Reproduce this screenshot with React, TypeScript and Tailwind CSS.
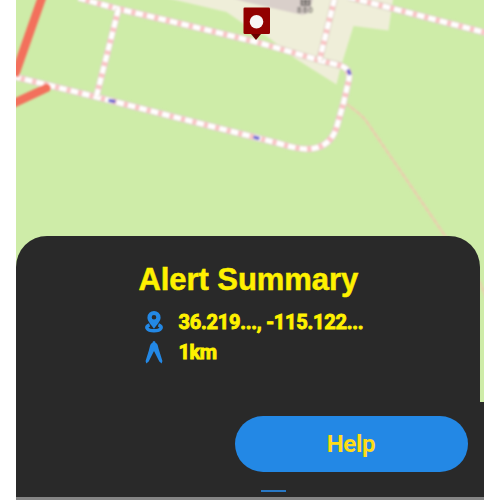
import React from "react";

const paths = [
  "M78 -2 L118 9 L165 20 L256 42 L318 60 L340 65.5 Q350 69 348.5 79 L343 103 L337 124 Q331 149 306 149 Q297 149 277 143 L170 116 L96 97 L13 76.5",
  "M118 9 L96 96",
  "M334 -1 L319 60",
  "M348 -3 L390 8 L486 33",
];

function MapView() {
  return (
    <svg className="col-start-1 row-start-1 block" width="468" height="410" viewBox="15.5 0 468 410">
      <defs>
        <filter id="soft" x="-5%" y="-5%" width="110%" height="110%">
          <feGaussianBlur stdDeviation="0.9" />
        </filter>
      </defs>
      <rect x="15" width="470" height="410" fill="#ceeca8" />
      <g filter="url(#soft)">
        <path d="M158 -4 L226 12 L245 25 L266 36 L294 58 L336 84.5 L340 68 L353 26 L388 30.5 L393 -4 Z" fill="#efeed9" />
        <path d="M229 -3 L245 2 L302 15 L309 13 L313 -3 Z" fill="#d9cfca" />
        <path d="M345 103 C351 108 359 113 365 120 L446 238 Q472 262 486 298" fill="none" stroke="#e6d6b0" strokeWidth="2.6" />
        <path d="M345 103 C351 108 359 113 365 120 L446 238 Q472 262 486 298" fill="none" stroke="#ecc7ab" strokeWidth="1.4" strokeDasharray="4 3" />
        {paths.map((d) => (
          <g key={d} fill="none" strokeLinejoin="round">
            <path d={d} stroke="#d8d8c8" strokeWidth="7" />
            <path d={d} stroke="#f9c6c6" strokeWidth="5.4" />
            <path d={d} stroke="#fff" strokeWidth="5" strokeDasharray="7.4 4.4" />
          </g>
        ))}
        <path d="M42 -4 L14 76" stroke="#f3705b" strokeWidth="8.5" />
        <path d="M12 104 L46 88" stroke="#f3705b" strokeWidth="8.5" strokeLinecap="round" />
        <path d="M108 100.3 L115 101.7 M253 137 L259 138.7 M347.5 69.5 L349.5 75" stroke="#6b64d2" strokeWidth="3.4" />
        <path d="M301 -1 v6 h8 v-6 M305 -1 v5 M302 1.5 h6" stroke="#5f5b59" strokeWidth="1.7" fill="none" />
        <text x="296.5" y="13.4" fontSize="8.5" fontWeight="bold" fontFamily="Liberation Sans, sans-serif" fill="#77736e" textLength="16">880</text>
      </g>
      <path d="M250.5 34 H260.5 L255.5 40 Z" fill="#680000" />
      <rect x="243" y="7.5" width="26.5" height="26.5" rx="1.3" fill="#920000" />
      <circle cx="256" cy="21.7" r="6.8" fill="#f8f6f6" />
    </svg>
  );
}

function PinIcon() {
  return (
    <svg width="18" height="22" viewBox="0 0 18 22" fill="#2388e5">
      <path fillRule="evenodd" d="M9 0 A6.6 6.6 0 0 1 15.6 6.4 C15.6 10.4 11.4 14 9 17.8 C6.6 14 2.4 10.4 2.4 6.4 A6.6 6.6 0 0 1 9 0 Z M9 4 A2.3 2.3 0 1 0 9 8.6 A2.3 2.3 0 1 0 9 4 Z" />
      <path d="M4.6 13.8 C-0.3 15.4 1.6 19.8 9 19.8 C16.4 19.8 18.3 15.4 13.4 13.8" fill="none" stroke="#2388e5" strokeWidth="3.5" />
    </svg>
  );
}

function RangeIcon() {
  return (
    <svg width="18" height="23" viewBox="0 0 18 23" fill="#2388e5">
      <path d="M8 0.2 H10 L10.5 1.8 C13.2 3 13 6 14 9 L17.4 20 L16.7 22.5 L14.3 20.5 L9 10 L3.7 20.5 L1.3 22.5 L0.6 20 L4 9 C5 6 4.8 3 7.5 1.8 Z" />
    </svg>
  );
}

export default function App() {
  return (
    <div className="flex h-[500px] w-[500px] justify-center overflow-hidden bg-white pr-[1px]">
      <main className="grid h-[500px] w-[468px] grid-cols-1 grid-rows-1 border-b-[3px] border-[#858585]">
        <MapView />
        <section className="z-10 col-start-1 row-start-1 mt-[236px] flex flex-col">
          <div className="h-[166px] w-[464px] rounded-t-[31px] bg-[#292929] pt-[26px]">
            <h1 className="ml-[123px] whitespace-nowrap font-['Liberation_Sans',Arial,sans-serif] text-[31px] font-bold leading-[36px] tracking-[-0.07px] text-[#fff100] [-webkit-text-stroke:0.5px_#fff100]">
              Alert Summary
            </h1>
            <div className="ml-[129px] mt-[9px] flex h-[30px] items-center gap-4 font-[Roboto,sans-serif] text-[20px] font-bold text-[#fff100] [-webkit-text-stroke:0.9px_#fff100]">
              <PinIcon />
              <span className="whitespace-nowrap tracking-[-0.25px]">36.219..., -115.122...</span>
            </div>
            <div className="ml-[129px] flex h-[30px] items-center gap-4 font-[Roboto,sans-serif] text-[20px] font-bold text-[#fff100] [-webkit-text-stroke:0.9px_#fff100]">
              <RangeIcon />
              <span className="tracking-[-0.4px]">1km</span>
            </div>
          </div>
          <div className="flex h-[95px] flex-col bg-[#292929] pt-[14px]">
            <button className="ml-[219px] h-[56px] w-[233px] rounded-full bg-[#2388e5] font-[Roboto,sans-serif] text-[24px] font-bold tracking-[-0.3px] text-[#ffdc16]">
              Help
            </button>
            <div className="ml-[245px] mt-[18px] h-[2px] w-[25px] bg-[#2878c5]" />
          </div>
        </section>
      </main>
    </div>
  );
}
